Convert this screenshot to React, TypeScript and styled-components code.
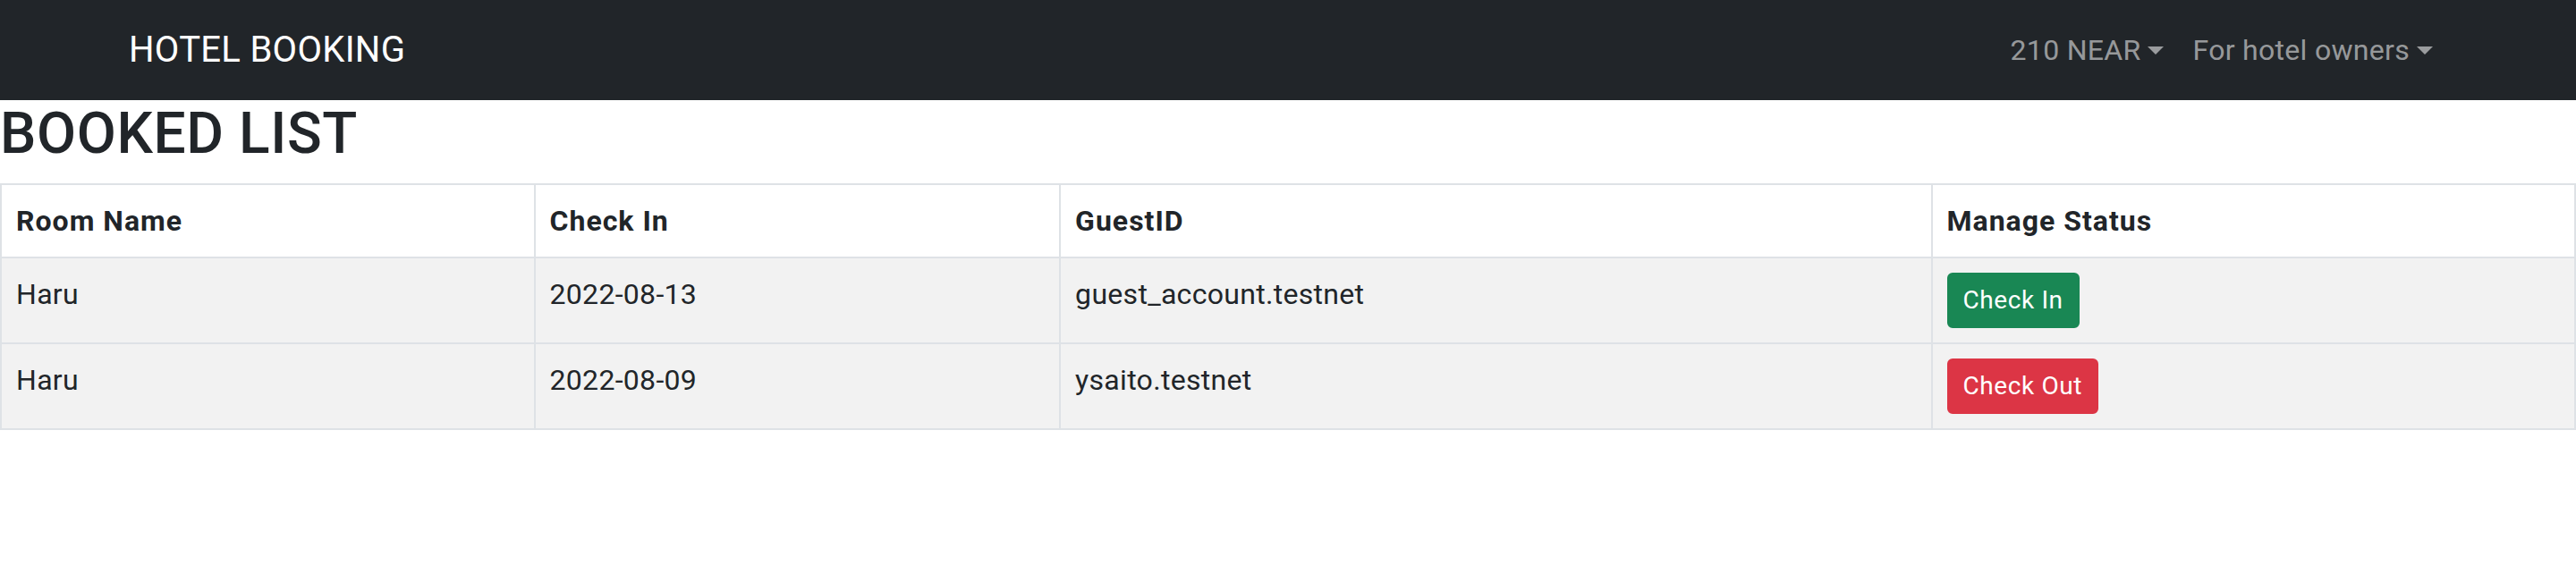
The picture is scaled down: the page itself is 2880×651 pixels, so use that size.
import React, { FC } from 'react';
import styled, { createGlobalStyle } from 'styled-components';

const GlobalStyle = createGlobalStyle`
  * { box-sizing: border-box; }
  body {
    margin: 0;
    background: #fff;
    color: #212529;
    font-family: Roboto, "Liberation Sans", Arial, sans-serif;
    font-size: 32px;
    line-height: 1.5;
    letter-spacing: 0.3px;
  }
`;

const NavBar = styled.nav`
  background: #212529;
  padding: 16px 0;
`;

const NavContainer = styled.div`
  display: flex;
  align-items: center;
  justify-content: space-between;
  max-width: 2640px;
  margin: 0 auto;
  padding: 0 24px;
`;

const Brand = styled.a`
  color: #fff;
  font-size: 40px;
  line-height: 60px;
  padding: 10px 0;
  text-decoration: none;
`;

const NavList = styled.div`
  display: flex;
  align-items: center;
`;

const NavLink = styled.a`
  display: flex;
  align-items: center;
  color: rgba(255, 255, 255, 0.55);
  padding: 16px;
  line-height: 48px;
  cursor: pointer;

  &::after {
    content: '';
    margin-left: 8px;
    border-top: 9.6px solid;
    border-left: 9.6px solid transparent;
    border-right: 9.6px solid transparent;
  }
`;

const Title = styled.h2`
  margin: 0 0 16px;
  font-size: 64px;
  font-weight: 500;
  line-height: 1.2;
  letter-spacing: 0.6px;
`;

const Table = styled.table`
  width: 100%;
  border-collapse: collapse;
  vertical-align: top;
`;

const HeadCell = styled.th<{ $w: number }>`
  width: ${(p) => p.$w}px;
  text-align: left;
  font-weight: 700;
  letter-spacing: 1px;
  padding: 16px;
  border: 2px solid #dee2e6;
  background: #fff;
`;

const Cell = styled.td`
  padding: 16px;
  border: 2px solid #dee2e6;
  background: #f2f2f2;
  vertical-align: top;
`;

const StatusButton = styled.button<{ $tone: 'in' | 'out' }>`
  font-family: inherit;
  font-size: 28px;
  line-height: 42px;
  letter-spacing: 0.6px;
  padding: 8px 16px;
  border: 2px solid ${(p) => (p.$tone === 'in' ? '#198754' : '#dc3545')};
  background: ${(p) => (p.$tone === 'in' ? '#198754' : '#dc3545')};
  color: #fff;
  border-radius: 6px;
  cursor: pointer;
`;

const bookings = [
  { room: 'Haru', date: '2022-08-13', guest: 'guest_account.testnet', checkedIn: false },
  { room: 'Haru', date: '2022-08-09', guest: 'ysaito.testnet', checkedIn: true },
];

const App: FC = () => (
  <>
    <GlobalStyle />
    <NavBar>
      <NavContainer>
        <Brand>HOTEL BOOKING</Brand>
        <NavList>
          <NavLink>210 NEAR</NavLink>
          <NavLink>For hotel owners</NavLink>
        </NavList>
      </NavContainer>
    </NavBar>
    <Title>BOOKED LIST</Title>
    <Table>
      <thead>
        <tr>
          <HeadCell $w={597}>Room Name</HeadCell>
          <HeadCell $w={588}>Check In</HeadCell>
          <HeadCell $w={975}>GuestID</HeadCell>
          <HeadCell $w={720}>Manage Status</HeadCell>
        </tr>
      </thead>
      <tbody>
        {bookings.map((b) => (
          <tr key={b.guest}>
            <Cell>{b.room}</Cell>
            <Cell>{b.date}</Cell>
            <Cell>{b.guest}</Cell>
            <Cell>
              {b.checkedIn ? (
                <StatusButton $tone="out">Check Out</StatusButton>
              ) : (
                <StatusButton $tone="in">Check In</StatusButton>
              )}
            </Cell>
          </tr>
        ))}
      </tbody>
    </Table>
  </>
);

export default App;
